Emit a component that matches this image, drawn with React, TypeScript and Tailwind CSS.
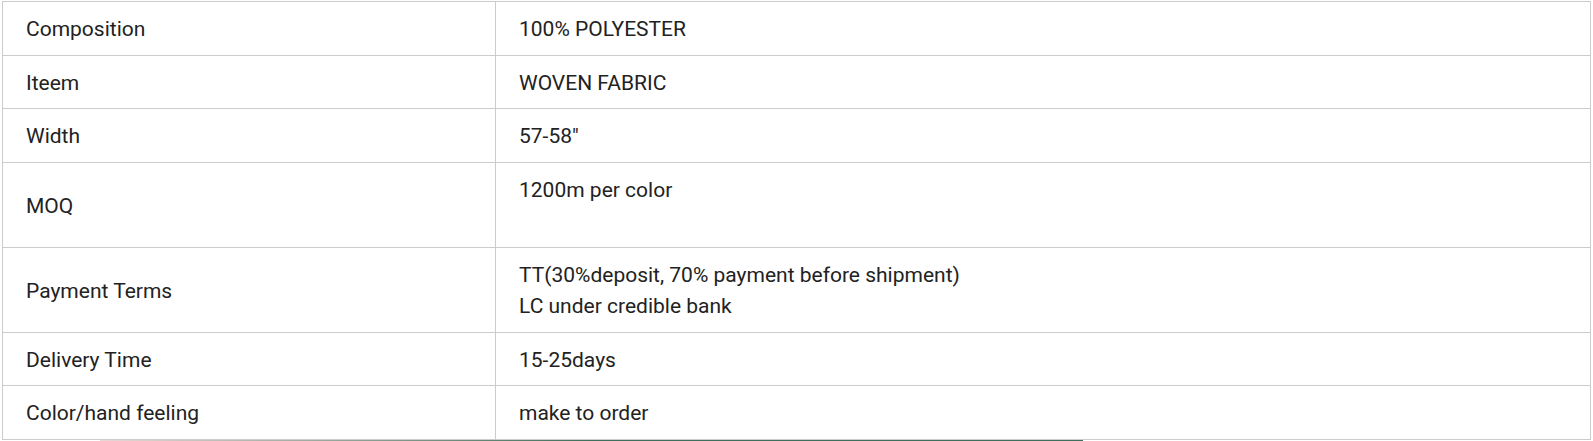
import React from 'react';

const rows: { label: string; value: string[] }[] = [
  { label: 'Composition', value: ['100% POLYESTER'] },
  { label: 'Iteem', value: ['WOVEN FABRIC'] },
  { label: 'Width', value: ['57-58"'] },
  { label: 'MOQ', value: ['1200m per color', ''] },
  { label: 'Payment Terms', value: ['TT(30%deposit, 70% payment before shipment)', 'LC under credible bank'] },
  { label: 'Delivery Time', value: ['15-25days'] },
  { label: 'Color/hand feeling', value: ['make to order'] },
];

const App = () => {
  return (
    <div className="w-[1593px] h-[441px] overflow-hidden bg-white font-['Roboto',sans-serif] text-[#222]">
      <div className="pl-[2px] pt-[1px] pr-[2px]">
        <table className="w-[1589px] border-collapse text-[21px] leading-[31.4px]">
          <tbody>
            {rows.map((r) => (
              <tr key={r.label}>
                <td className="w-[493px] border border-[#cccccc] px-[23px] pt-[12.1px] pb-[9.1px] align-middle">{r.label}</td>
                <td className="border border-[#cccccc] px-[23px] pt-[12.1px] pb-[9.1px] align-top">
                  {r.value.map((v, i) => (
                    <div key={i} className="h-[31.4px]">{v}</div>
                  ))}
                </td>
              </tr>
            ))}
          </tbody>
        </table>
      </div>
      {/* strip of the next block peeking under the table */}
      <div className="ml-[100px] w-[983px] h-[2px] bg-gradient-to-r from-[#e8d8d6] via-[#3f6f5c] to-[#3f6f5c]" />
    </div>
  );
};

export default App;
